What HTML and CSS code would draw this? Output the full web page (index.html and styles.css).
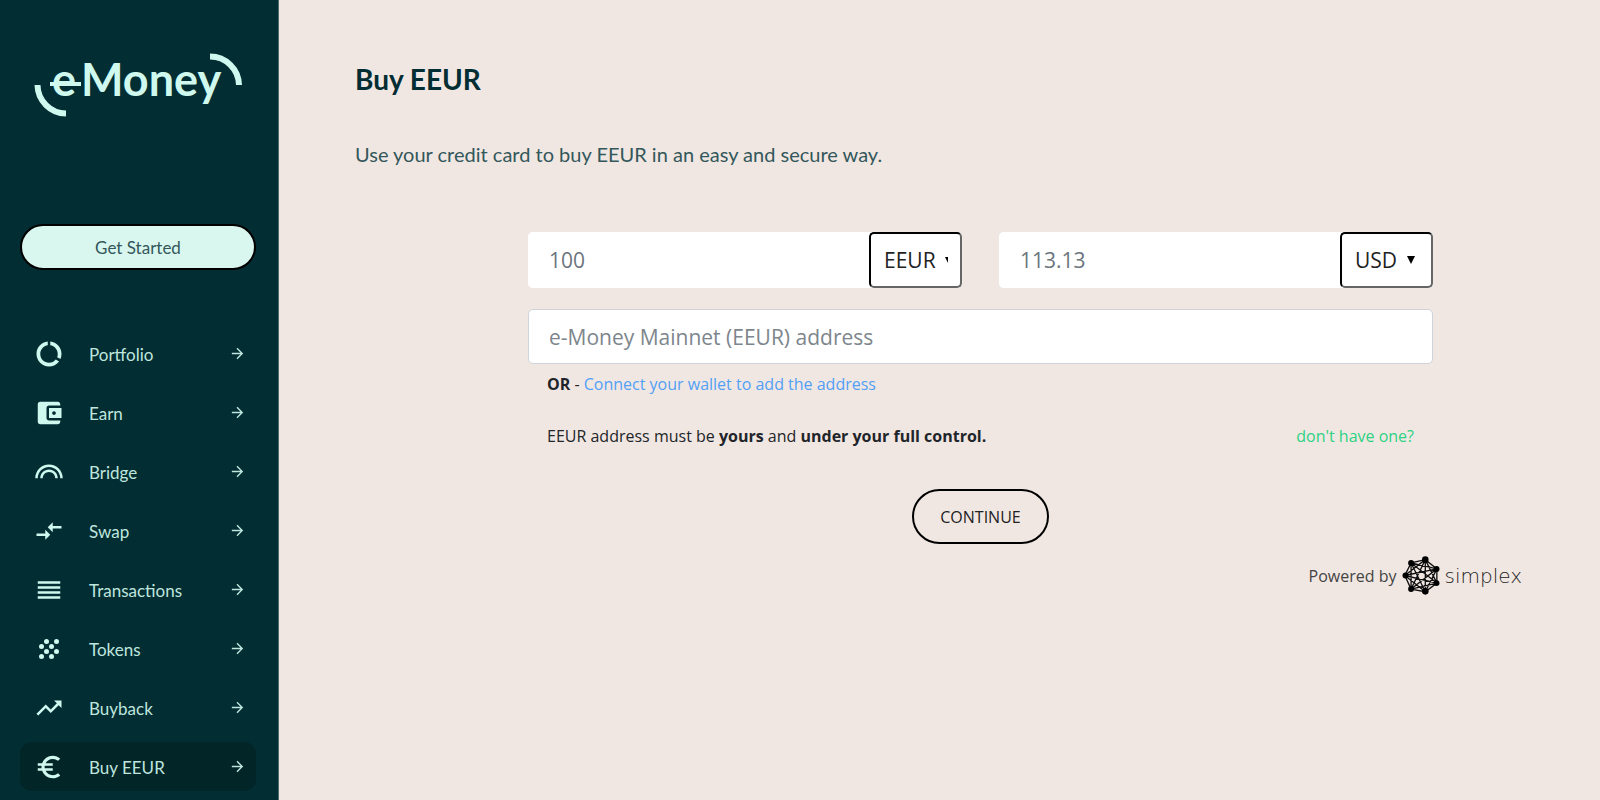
FILE: index.html
```
<!DOCTYPE html>
<html lang="en">
<head>
  <meta charset="UTF-8">
  <meta name="viewport" content="width=device-width, initial-scale=1">
  <title>eMoney - Buy EEUR</title>
  <link rel="stylesheet" href="styles.css">
</head>
<body>
  <aside class="sidebar">
    <a class="logo" href="#" aria-label="eMoney">
      <svg viewBox="0 0 210 66" width="210" height="66">
        <path class="arc" d="M3.5 32A29 29 0 0 0 32 60.5M176 3.5A29 29 0 0 1 205 32"/>
        <path class="bar" d="M16 31h31"/>
        <text x="18" y="43">e</text>
        <text x="47" y="43">Money</text>
      </svg>
    </a>

    <button class="get-started" type="button">Get Started</button>

    <nav class="menu">
      <a href="#">
        <svg class="icon" viewBox="0 0 24 24"><path d="M13 2.05v3.03c3.39.49 6 3.39 6 6.92 0 .9-.18 1.75-.48 2.54l2.6 1.53c.56-1.24.88-2.62.88-4.07 0-5.18-3.95-9.45-9-9.95zM12 19c-3.87 0-7-3.13-7-7 0-3.53 2.61-6.43 6-6.92V2.05c-5.06.5-9 4.76-9 9.95 0 5.52 4.47 10 9.99 10 3.31 0 6.24-1.61 8.06-4.09l-2.6-1.53C16.17 17.98 14.21 19 12 19z"/></svg>
        <span>Portfolio</span>
        <svg class="arrow" viewBox="0 0 24 24"><path d="M12 4l-1.41 1.41L16.17 11H4v2h12.17l-5.58 5.59L12 20l8-8z"/></svg>
      </a>
      <a href="#">
        <svg class="icon" viewBox="0 0 24 24"><path d="M21 18v1c0 1.1-.9 2-2 2H5c-1.11 0-2-.9-2-2V5c0-1.1.89-2 2-2h14c1.1 0 2 .9 2 2v1h-9c-1.11 0-2 .9-2 2v8c0 1.1.89 2 2 2h9zm-9-2h10V8H12v8zm4-2.5c-.83 0-1.5-.67-1.5-1.5s.67-1.5 1.5-1.5 1.5.67 1.5 1.5-.67 1.5-1.5 1.5z"/></svg>
        <span>Earn</span>
        <svg class="arrow" viewBox="0 0 24 24"><path d="M12 4l-1.41 1.41L16.17 11H4v2h12.17l-5.58 5.59L12 20l8-8z"/></svg>
      </a>
      <a href="#">
        <svg class="icon" viewBox="0 0 24 24"><path d="M12 10c-3.86 0-7 3.14-7 7h2c0-2.76 2.24-5 5-5s5 2.24 5 5h2c0-3.86-3.14-7-7-7zm0-4C5.93 6 1 10.93 1 17h2c0-4.96 4.04-9 9-9s9 4.04 9 9h2c0-6.07-4.93-11-11-11z"/></svg>
        <span>Bridge</span>
        <svg class="arrow" viewBox="0 0 24 24"><path d="M12 4l-1.41 1.41L16.17 11H4v2h12.17l-5.58 5.59L12 20l8-8z"/></svg>
      </a>
      <a href="#">
        <svg class="icon" viewBox="0 0 24 24"><path d="M9.01 14H2v2h7.01v3L13 15l-3.99-4v3zm5.98-1v-3H22V8h-7.01V5L11 9l3.99 4z"/></svg>
        <span>Swap</span>
        <svg class="arrow" viewBox="0 0 24 24"><path d="M12 4l-1.41 1.41L16.17 11H4v2h12.17l-5.58 5.59L12 20l8-8z"/></svg>
      </a>
      <a href="#">
        <svg class="icon" viewBox="0 0 24 24"><path d="M3 15h18v-2H3v2zm0 4h18v-2H3v2zm0-8h18V9H3v2zm0-6v2h18V5H3z"/></svg>
        <span>Transactions</span>
        <svg class="arrow" viewBox="0 0 24 24"><path d="M12 4l-1.41 1.41L16.17 11H4v2h12.17l-5.58 5.59L12 20l8-8z"/></svg>
      </a>
      <a href="#">
        <svg class="icon" viewBox="0 0 24 24">
          <circle cx="10" cy="6" r="2"/><circle cx="18" cy="6" r="2"/>
          <circle cx="6" cy="10" r="2"/><circle cx="14" cy="10" r="2"/>
          <circle cx="10" cy="14" r="2"/><circle cx="18" cy="14" r="2"/>
          <circle cx="6" cy="18" r="2"/><circle cx="14" cy="18" r="2"/>
        </svg>
        <span>Tokens</span>
        <svg class="arrow" viewBox="0 0 24 24"><path d="M12 4l-1.41 1.41L16.17 11H4v2h12.17l-5.58 5.59L12 20l8-8z"/></svg>
      </a>
      <a href="#">
        <svg class="icon" viewBox="0 0 24 24"><path d="M16 6l2.29 2.29-4.88 4.88-4-4L2 16.59 3.41 18l6-6 4 4 6.3-6.29L22 12V6z"/></svg>
        <span>Buyback</span>
        <svg class="arrow" viewBox="0 0 24 24"><path d="M12 4l-1.41 1.41L16.17 11H4v2h12.17l-5.58 5.59L12 20l8-8z"/></svg>
      </a>
      <a class="active" href="#">
        <svg class="icon" viewBox="0 0 24 24"><path d="M15 18.5c-2.51 0-4.68-1.42-5.76-3.5H15v-2H8.58c-.05-.33-.08-.66-.08-1s.03-.67.08-1H15V9H9.24C10.32 6.92 12.5 5.5 15 5.5c1.61 0 3.09.59 4.23 1.57L21 5.3C19.41 3.87 17.3 3 15 3c-3.92 0-7.24 2.51-8.48 6H3v2h3.06c-.04.33-.06.66-.06 1s.02.67.06 1H3v2h3.52c1.24 3.49 4.56 6 8.48 6 2.31 0 4.41-.87 6-2.3l-1.78-1.77c-1.13.98-2.6 1.57-4.22 1.57z"/></svg>
        <span>Buy EEUR</span>
        <svg class="arrow" viewBox="0 0 24 24"><path d="M12 4l-1.41 1.41L16.17 11H4v2h12.17l-5.58 5.59L12 20l8-8z"/></svg>
      </a>
    </nav>
  </aside>

  <main class="content">
    <h1>Buy EEUR</h1>
    <p class="intro">Use your credit card to buy EEUR in an easy and secure way.</p>

    <form class="buy-form">
      <div class="amounts">
        <div class="amount">
          <input type="text" value="100" aria-label="Amount to buy">
          <select class="crypto" aria-label="Crypto currency">
            <option>EEUR</option>
          </select>
        </div>
        <div class="amount">
          <input type="text" value="113.13" aria-label="Amount to pay">
          <select aria-label="Payment currency">
            <option>USD</option>
            <option>EUR</option>
          </select>
        </div>
      </div>

      <input class="address" type="text" placeholder="e-Money Mainnet (EEUR) address" aria-label="e-Money Mainnet (EEUR) address">
      <p class="connect"><b>OR</b> - <a href="#">Connect your wallet to add the address</a></p>
      <div class="note">
        <p>EEUR address must be <b>yours</b> and <b>under your full control.</b></p>
        <a href="#">don't have one?</a>
      </div>

      <button class="continue" type="button">CONTINUE</button>
    </form>

    <div class="powered">
      <span>Powered by</span>
      <svg viewBox="0 0 114 118" width="38" height="39">
        <path d="M8 59L27 21 70 11 105 39V82L70 108 27 100ZM8 59L70 11M8 59L105 39M8 59L105 82M8 59L70 108M27 21L105 39M27 21L105 82M27 21L70 108M27 21V100M70 11L105 82M70 11V108M70 11L27 100M105 39L70 108M105 39L27 100M105 82L27 100"/>
        <circle cx="10" cy="59" r="9"/><circle cx="27" cy="21" r="9"/>
        <circle cx="70" cy="11" r="10"/><circle cx="104" cy="39" r="9"/>
        <circle cx="104" cy="82" r="9"/><circle cx="70" cy="107" r="10"/>
        <circle cx="27" cy="100" r="9"/>
      </svg>
      <span class="simplex">simplex</span>
    </div>
  </main>
</body>
</html>
```
FILE: styles.css
```
* {
  box-sizing: border-box;
}

body {
  margin: 0;
  min-height: 100vh;
  display: flex;
  background: #f1e7e2;
  color: #212529;
  font-family: "Open Sans", "Noto Sans", sans-serif;
}

h1, p {
  margin: 0;
}

a {
  text-decoration: none;
}

/* sidebar */
.sidebar {
  flex: none;
  width: 279px;
  padding: 53px 22px 9px 20px;
  background: #022d33;
  border-right: 1px solid #4e6a6e;
  font-family: Lato, sans-serif;
}

.logo {
  display: block;
  height: 66px;
  margin: 0 0 105px 14px;
}

.logo svg {
  display: block;
}

.logo text {
  fill: #cff8ee;
  font-family: Lato, sans-serif;
  font-size: 45px;
  font-weight: bold;
}

.logo path {
  fill: none;
  stroke: #cff8ee;
  stroke-width: 6px;
}

.logo .bar {
  stroke-width: 4px;
}

.get-started {
  display: block;
  width: 100%;
  height: 46px;
  border: 2px solid #000;
  border-radius: 23px;
  background: #d9f7ee;
  color: #33575b;
  font-family: Lato, sans-serif;
  font-size: 17px;
}

.menu {
  display: flex;
  flex-direction: column;
  gap: 10px;
  margin-top: 59px;
}

.menu a {
  display: flex;
  align-items: center;
  height: 49px;
  padding: 0 10px 0 14px;
  border-radius: 12px;
  color: #bfe6de;
  font-size: 17px;
}

.menu a.active {
  background: #022528;
}

.menu span {
  flex: 1;
  margin-left: 25px;
  padding-top: 2px;
}

.icon {
  width: 30px;
  height: 30px;
  fill: #cff8ee;
}

.arrow {
  width: 17px;
  height: 17px;
  fill: #bfe6de;
}

/* content */
.content {
  flex: 1;
  padding: 59px 78px 40px 76px;
}

h1 {
  color: #022d33;
  font-family: Lato, sans-serif;
  font-size: 28px;
  font-weight: bold;
  line-height: 40px;
}

.intro {
  margin-top: 40px;
  color: #33575b;
  font-family: Lato, sans-serif;
  font-size: 20px;
  line-height: 30px;
}

.buy-form {
  margin: 63px 89px 0 173px;
}

.amounts {
  display: grid;
  grid-template-columns: 1fr 1fr;
  gap: 37px;
}

.amount {
  display: flex;
  height: 56px;
  border-radius: 5px;
  background: #fff;
}

input {
  flex: 1;
  min-width: 0;
  padding: 0 21px;
  border: 0;
  border-radius: 5px;
  background: #fff;
  color: #6c757d;
  font-family: inherit;
  font-size: 21px;
}

input::placeholder {
  color: #7d868c;
  opacity: 1;
}

select {
  width: 93px;
  padding: 0 0 0 13px;
  border: 2px solid;
  border-color: #000 #666 #666 #000;
  border-radius: 5px;
  appearance: none;
  background: #fff url("data:image/svg+xml,%3Csvg xmlns='http://www.w3.org/2000/svg' width='8' height='8'%3E%3Cpath d='M0 0h8L4 8z'/%3E%3C/svg%3E") no-repeat right 16px center;
  color: #222;
  font-family: inherit;
  font-size: 21px;
}

select.crypto {
  background-image: url("data:image/svg+xml,%3Csvg xmlns='http://www.w3.org/2000/svg' width='3' height='6'%3E%3Cpath d='M0 0h3v6z'/%3E%3C/svg%3E");
  background-position: right 12px center;
}

.address {
  display: block;
  width: 100%;
  height: 55px;
  margin-top: 21px;
  padding: 0 20px;
  border: 1px solid #ced4da;
}

.connect {
  margin-left: 19px;
  padding-top: 8px;
  font-size: 16px;
  line-height: 24px;
}

.connect a {
  color: #51a0f5;
}

.note {
  display: flex;
  justify-content: space-between;
  margin-top: 28px;
  padding: 0 19px;
  font-size: 16px;
  line-height: 24px;
}

.note a {
  color: #2dd284;
}

.continue {
  display: block;
  height: 55px;
  margin: 41px auto 0;
  padding: 0 26px;
  border: 2px solid #000;
  border-radius: 28px;
  background: transparent;
  color: #222;
  font-family: inherit;
  font-size: 16px;
}

.powered {
  display: flex;
  justify-content: flex-end;
  align-items: center;
  gap: 5px;
  margin-top: 12px;
  color: #444;
  font-size: 16px;
}

.powered path {
  fill: none;
  stroke: #111;
  stroke-width: 4px;
}

.simplex {
  color: #222;
  font-family: "DejaVu Sans", sans-serif;
  font-size: 20px;
  font-weight: 200;
  line-height: 24px;
}
```
